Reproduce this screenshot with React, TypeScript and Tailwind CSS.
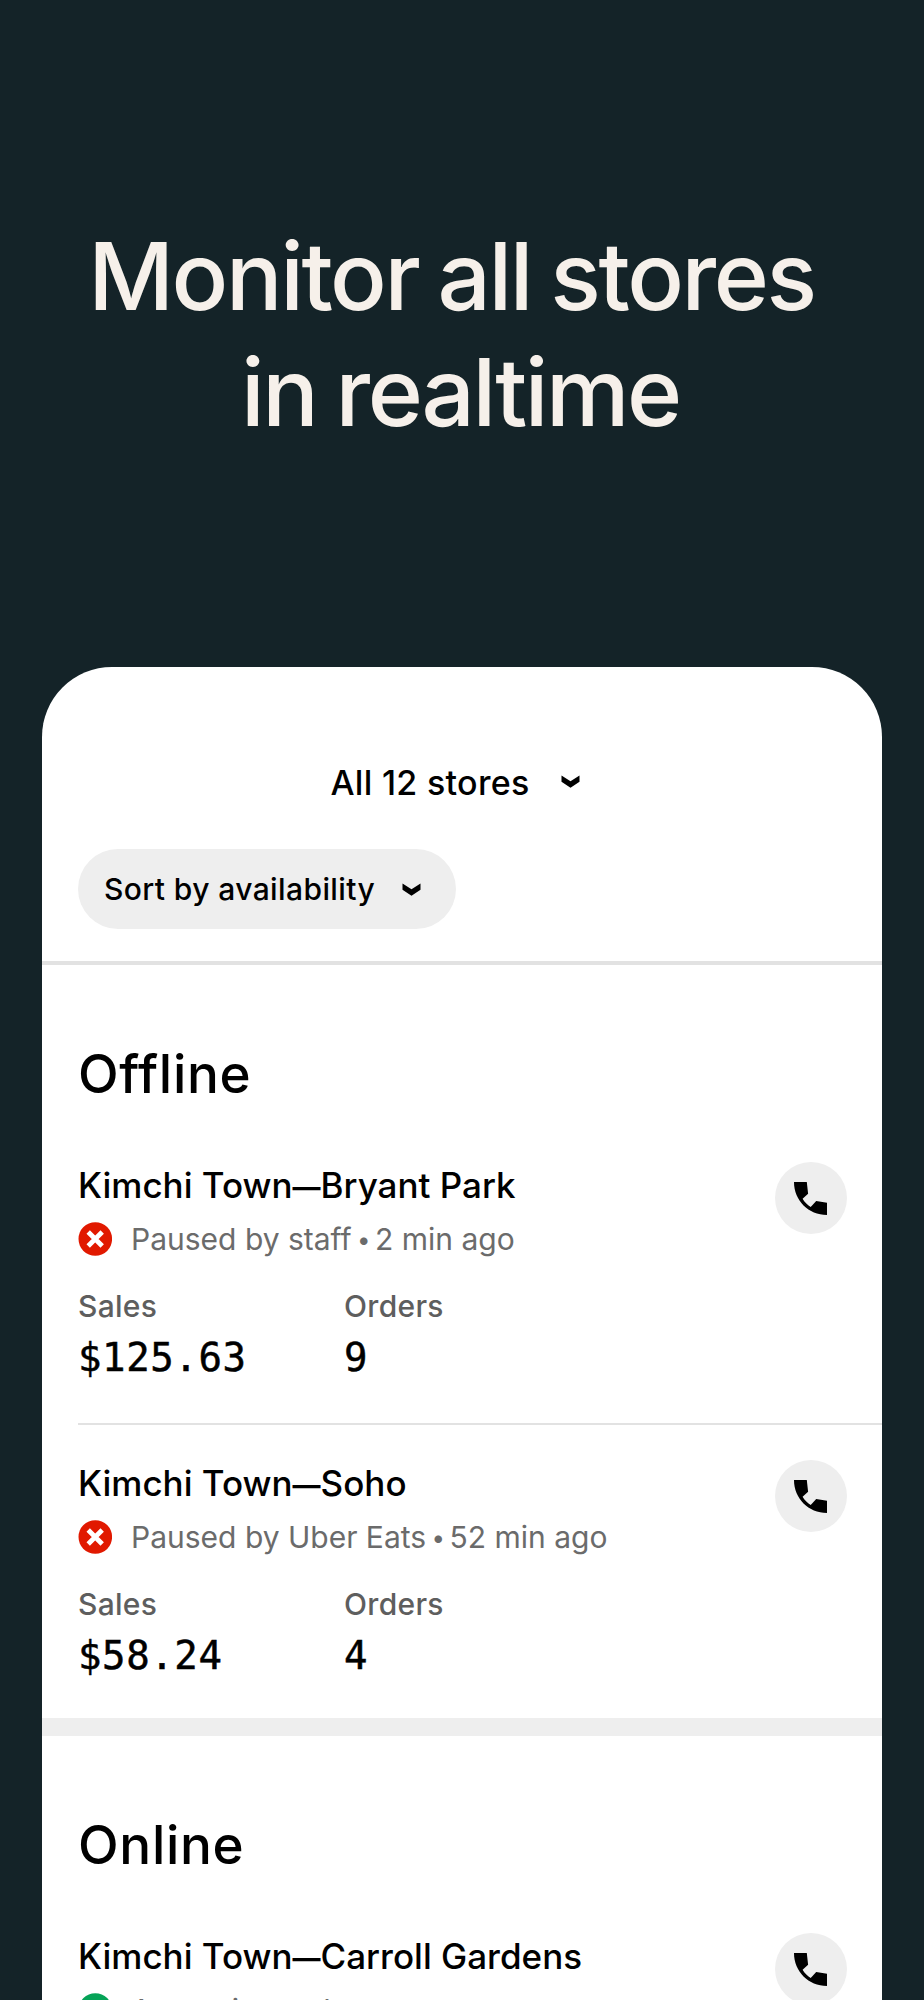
import { Fragment } from "react";

type Store = {
  id: number;
  branch: string;
  status: "offline" | "online";
  note: string;
  age?: string;
  sales: string;
  orders: number;
};

const offlineStores: Store[] = [
  { id: 1, branch: "Bryant Park", status: "offline", note: "Paused by staff", age: "2 min ago", sales: "$125.63", orders: 9 },
  { id: 2, branch: "Soho", status: "offline", note: "Paused by Uber Eats", age: "52 min ago", sales: "$58.24", orders: 4 }
];

const onlineStores: Store[] = [
  { id: 3, branch: "Carroll Gardens", status: "online", note: "Accepting orders", sales: "", orders: 0 }
];

function ChevronIcon({ className }: { className?: string }) {
  return (
    <svg className={`h-10 w-10 shrink-0 ${className ?? ""}`} viewBox="0 0 40 40">
      <path d="M10.5 14.5l9 5.8 9-5.800v6.200l-9 6-9-6z" />
    </svg>
  );
}

function PhoneIcon() {
  return (
    <svg className="mr-0.5 h-[33px] w-[33px]" viewBox="0 0 33 33">
      <path d="M0 0h12.8l1.3 11.7-5.5 5.1c2 3.4 4.6 6.1 8.1 8.2l5.5-5.9L33 20.7V33C14.5 33 0 18.5 0 0z" />
    </svg>
  );
}

function StatusIcon({ status }: { status: Store["status"] }) {
  return (
    <svg className="h-[34px] w-[34px] shrink-0" viewBox="0 0 34 34">
      <circle cx="17.3" cy="17" r="16.8" fill={status === "offline" ? "#e11900" : "#05a357"} />
      <path
        d={status === "offline" ? "m10.2 10 14 14M24.2 10l-14 14" : "m9.5 17.5 5 5 10-10.5"}
        fill="none"
        stroke="#fff"
        strokeWidth="4.8"
      />
    </svg>
  );
}

function Stat({ label, value }: { label: string; value: string | number }) {
  return (
    <div className="w-[266px]">
      <p className="text-[30px] leading-9 font-medium tracking-[0.3px] text-[#5e5e5e]">{label}</p>
      <p className="mt-[11px] h-[45px] font-['DejaVu_Sans_Mono',monospace] text-[39px] leading-[46px] tracking-[0.6px] [-webkit-text-stroke:0.5px_black]">
        {value}
      </p>
    </div>
  );
}

function StoreRow({ store }: { store: Store }) {
  return (
    <article className="flex items-start justify-between pr-[35px]">
      <div className="pt-0.5">
        <h3 className="h-[43px] text-[35px] leading-[42px] font-medium whitespace-nowrap">
          Kimchi Town<span className="align-[1px] text-[28px] leading-none font-bold">—</span>
          {store.branch}
        </h3>
        <div className="mt-[15px] flex h-[34px] items-center gap-[19px]">
          <StatusIcon status={store.status} />
          <p className="text-[30px] leading-9 whitespace-nowrap text-[#6b6b6b]">
            {store.note}
            {store.age && (
              <>
                {" "}
                <span className="-mr-1 -ml-[3px] align-[2px] text-[24px] leading-none">•</span> {store.age}
              </>
            )}
          </p>
        </div>
        {store.sales && (
          <div className="mt-8 flex">
            <Stat label="Sales" value={store.sales} />
            <Stat label="Orders" value={store.orders} />
          </div>
        )}
      </div>
      <button className="flex h-[72px] w-[72px] shrink-0 items-center justify-center rounded-full bg-[#eee]">
        <PhoneIcon />
      </button>
    </article>
  );
}

function StoreSection({ title, stores }: { title: string; stores: Store[] }) {
  return (
    <section className="pt-[79px] pl-9">
      <h2 className="mb-[58px] text-[53px] leading-[60px] font-medium tracking-[0.7px]">{title}</h2>
      {stores.map((store, index) => (
        <Fragment key={store.id}>
          {index > 0 && <div className="mt-[43px] mb-[35px] h-0.5 bg-[#e2e2e2]" />}
          <StoreRow store={store} />
        </Fragment>
      ))}
    </section>
  );
}

export default function App() {
  return (
    <main className="flex h-[2000px] w-[924px] flex-col overflow-hidden bg-[#142328] font-['Inter',sans-serif] text-black">
      <h1 className="pt-[218px] text-center text-[94px] leading-[116px] font-medium tracking-[-2.4px] text-[#f6f0ea] [word-spacing:-3.5px]">
        <span className="block pr-[21px]">Monitor all stores</span>
        <span className="block pr-[3px]">in realtime</span>
      </h1>

      <div className="mx-[42px] mt-[216.5px] flex-1 overflow-hidden rounded-t-[70px] bg-white">
        <header className="border-b-4 border-[#e2e2e2] pt-[96.5px] pb-8">
          <div className="flex h-10 items-center justify-center gap-[21px] pr-[3px]">
            <p className="text-[34px] leading-10 font-medium tracking-[0.3px]">All 12 stores</p>
            <ChevronIcon className="-mt-1" />
          </div>
          <button className="mt-[46px] ml-9 flex h-20 w-[378px] items-center justify-between rounded-full bg-[#eee] pr-6 pl-[26px]">
            <span className="text-[30px] leading-9 font-medium tracking-[0.4px]">Sort by availability</span>
            <ChevronIcon />
          </button>
        </header>

        <StoreSection title="Offline" stores={offlineStores} />
        <div className="mt-10 h-[18px] bg-[#eee]" />
        <StoreSection title="Online" stores={onlineStores} />
      </div>
    </main>
  );
}
